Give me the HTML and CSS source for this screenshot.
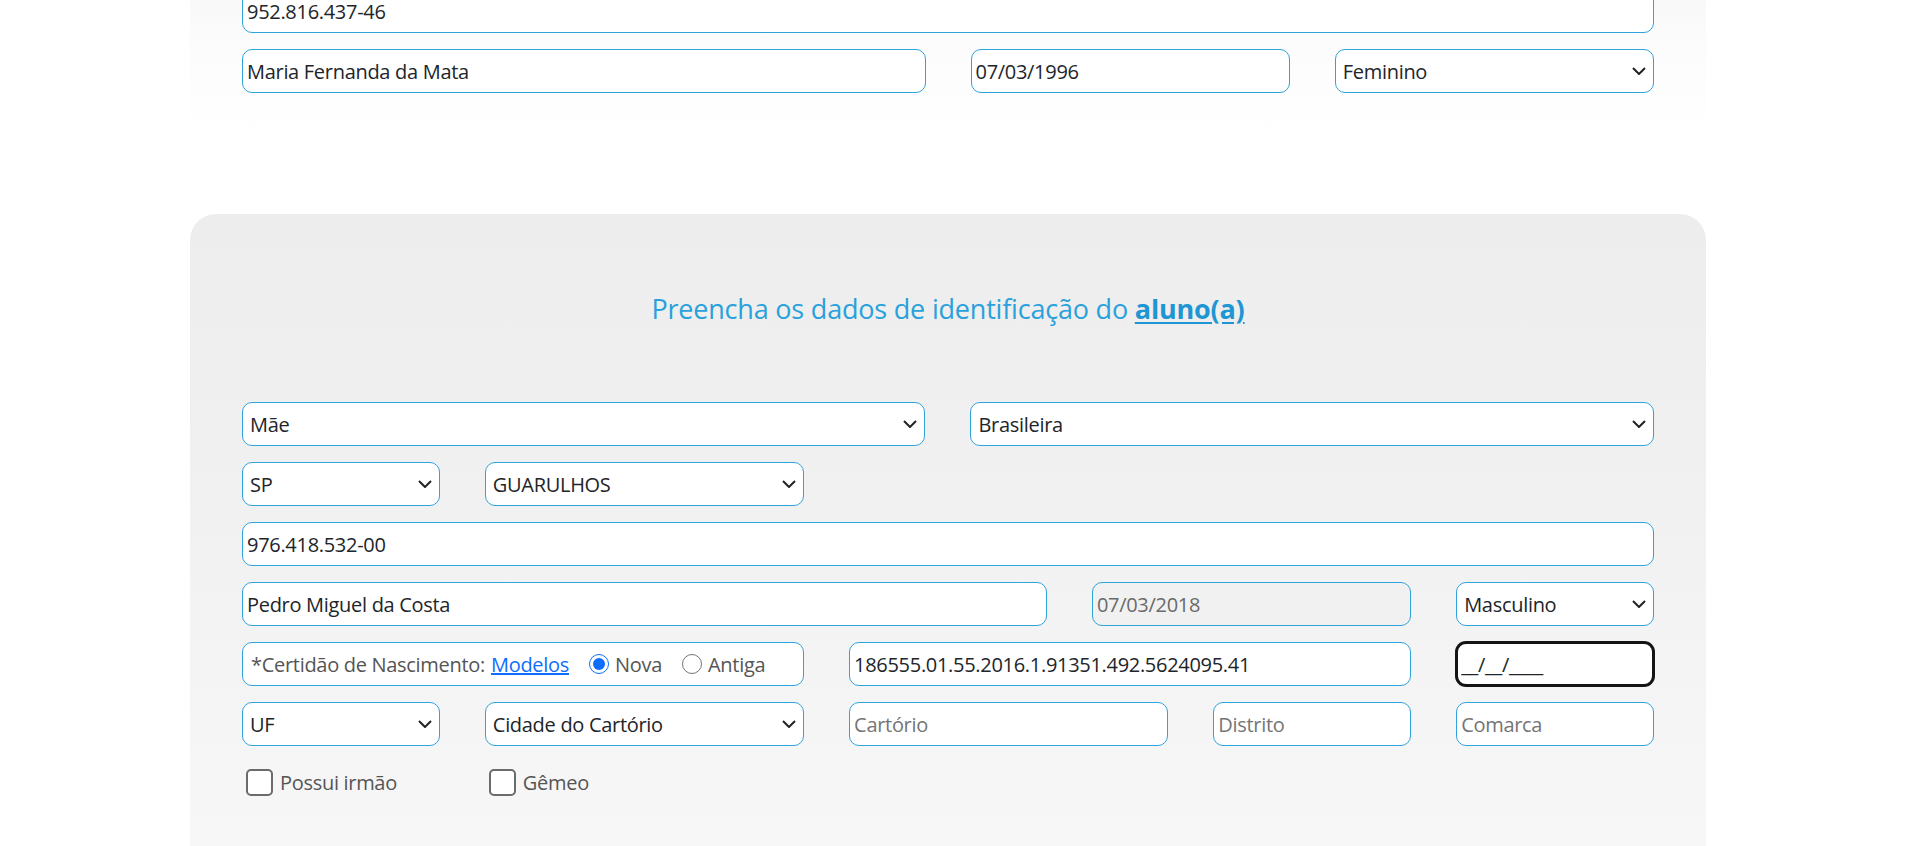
FILE: index.html
```html
<!DOCTYPE html>
<html lang="pt-BR">
<head>
<meta charset="utf-8">
<title>Ficha de matrícula</title>
<link rel="stylesheet" href="styles.css">
</head>
<body>
<main class="page">
  <section class="card card-resp">
    <div class="grid">
      <input class="field c12" type="text" value="952.816.437-46">
      <input class="field c6" type="text" value="Maria Fernanda da Mata">
      <input class="field c3" type="text" value="07/03/1996">
      <select class="field c3"><option>Feminino</option></select>
    </div>
  </section>

  <section class="card card-aluno">
    <h2 class="card-title">Preencha os dados de identificação do <a href="#">aluno(a)</a></h2>
    <div class="grid">
      <select class="field c6"><option>Mãe</option></select>
      <select class="field c6"><option>Brasileira</option></select>
      <select class="field c2"><option>SP</option></select>
      <select class="field c3"><option>GUARULHOS</option></select>
      <input class="field c12" type="text" value="976.418.532-00">
      <input class="field c7" type="text" value="Pedro Miguel da Costa">
      <input class="field c3" type="text" value="07/03/2018" disabled>
      <select class="field c2"><option>Masculino</option></select>
      <div class="field c5 cert">
        <span class="cert-label">*Certidão de Nascimento:</span>
        <a class="cert-link" href="#">Modelos</a>
        <label class="radio"><input type="radio" name="cert" checked>Nova</label>
        <label class="radio"><input type="radio" name="cert">Antiga</label>
      </div>
      <input class="field c5" type="text" value="186555.01.55.2016.1.91351.492.5624095.41">
      <input class="field c2 is-focused" type="text" value="__/__/____">
      <select class="field c2"><option>UF</option></select>
      <select class="field c3"><option>Cidade do Cartório</option></select>
      <input class="field c3" type="text" placeholder="Cartório">
      <input class="field c2" type="text" placeholder="Distrito">
      <input class="field c2" type="text" placeholder="Comarca">
      <label class="check c2"><input type="checkbox">Possui irmão</label>
      <label class="check c2"><input type="checkbox">Gêmeo</label>
    </div>
  </section>
</main>
<script src="scroll.js"></script>
</body>
</html>
```

FILE: styles.css
```css
* {
  box-sizing: border-box;
}

html,
body {
  margin: 0;
  padding: 0;
}

::-webkit-scrollbar {
  width: 24px;
  background: #f1f1f1;
}

::-webkit-scrollbar-track {
  background: #f1f1f1;
}

::-webkit-scrollbar-thumb {
  background: #c1c1c1;
  border-left: 2px solid #f1f1f1;
  border-right: 2px solid #f1f1f1;
}

::-webkit-scrollbar-button:single-button {
  display: block;
  height: 20px;
  background-color: #f1f1f1;
  background-repeat: no-repeat;
  background-position: center;
}

::-webkit-scrollbar-button:single-button:vertical:decrement {
  background-image: url("data:image/svg+xml,%3Csvg xmlns='http://www.w3.org/2000/svg' width='10' height='5' viewBox='0 0 10 5'%3E%3Cpath d='M0 5L5 0L10 5Z' fill='%23505050'/%3E%3C/svg%3E");
}

::-webkit-scrollbar-button:single-button:vertical:increment {
  background-image: url("data:image/svg+xml,%3Csvg xmlns='http://www.w3.org/2000/svg' width='10' height='5' viewBox='0 0 10 5'%3E%3Cpath d='M0 0L10 0L5 5Z' fill='%23505050'/%3E%3C/svg%3E");
}

body {
  font-family: "Open Sans", "Noto Sans", sans-serif;
  font-size: 20px;
  letter-spacing: -0.3px;
  color: #212529;
  background: #ffffff;
}

.page {
  width: 1516px;
  margin-left: 190px;
  min-height: 3627px;
}

.card {
  padding-left: 52px;
  padding-right: 52px;
}

.card-resp {
  padding-top: 1271px;
  padding-bottom: 47px;
  border-radius: 0 0 26px 26px;
  background: linear-gradient(to bottom, #ececec 0, #f6f6f6 1250px, #fcfcfc 1330px, #ffffff 100%);
}

.card-aluno {
  margin-top: 74px;
  padding-top: 77px;
  padding-bottom: 60px;
  min-height: 1400px;
  border-radius: 26px;
  background: linear-gradient(to bottom, #ededed 0, #f1f1f1 300px, #f5f5f5 500px, #f7f7f7 640px, #f9f9f9 100%);
}

.card-title {
  margin: 0 0 75px;
  text-align: center;
  font-size: 27px;
  letter-spacing: -0.2px;
  line-height: 36px;
  font-weight: 400;
  color: #29a1dc;
}

.card-title a {
  color: #1e96d4;
  font-weight: 700;
  text-decoration: underline;
  text-underline-offset: 3px;
}

.grid {
  display: grid;
  grid-template-columns: repeat(12, 1fr);
  column-gap: 45px;
  row-gap: 16px;
}

.c2 { grid-column: span 2; }
.c3 { grid-column: span 3; }
.c5 { grid-column: span 5; }
.c6 { grid-column: span 6; }
.c7 { grid-column: span 7; }
.c12 { grid-column: span 12; }

.field {
  height: 44px;
  margin: 0;
  border: 1px solid #2fa3db;
  border-radius: 10px;
  background-color: #ffffff;
  font-family: inherit;
  font-size: 20px;
  letter-spacing: -0.3px;
  color: #212529;
  padding: 0 4px;
  outline: none;
}

select.field {
  appearance: none;
  -webkit-appearance: none;
  padding: 0 28px 0 7px;
  background-image: url("data:image/svg+xml,%3Csvg xmlns='http://www.w3.org/2000/svg' width='14' height='8' viewBox='0 0 14 8'%3E%3Cpath d='M1 1l6 6 6-6' fill='none' stroke='%23222222' stroke-width='2'/%3E%3C/svg%3E");
  background-repeat: no-repeat;
  background-position: right 7px center;
}

.field::placeholder {
  color: #757575;
}

.field:disabled {
  background-color: #f1f1f1;
  color: #6a6a6a;
}

.field.is-focused {
  border: 2px solid #141414;
  box-shadow: 0 0 0 1px #141414;
  padding-left: 3px;
}

.cert {
  display: flex;
  align-items: center;
  padding-left: 8px;
  color: #555555;
}

.cert-label {
  margin-right: 6px;
}

.cert-link {
  color: #0d6efd;
  text-decoration: underline;
  margin-right: 20px;
}

.radio {
  display: flex;
  align-items: center;
  gap: 6px;
  margin-right: 20px;
  color: #555555;
}

.radio input {
  width: 20px;
  height: 20px;
  margin: 0;
  accent-color: #0d6efd;
}

.check {
  display: flex;
  align-items: center;
  height: 40px;
  gap: 7px;
  color: #555555;
}

.check input {
  appearance: none;
  -webkit-appearance: none;
  width: 27px;
  height: 27px;
  margin: 0 0 0 4px;
  border: 2px solid #6b6b6b;
  border-radius: 5px;
  background: #ffffff;
}
```

FILE: scroll.js
```js
window.scrollTo(0, 1282);
window.addEventListener('load', function () {
  window.scrollTo(0, 1282);
});
```
